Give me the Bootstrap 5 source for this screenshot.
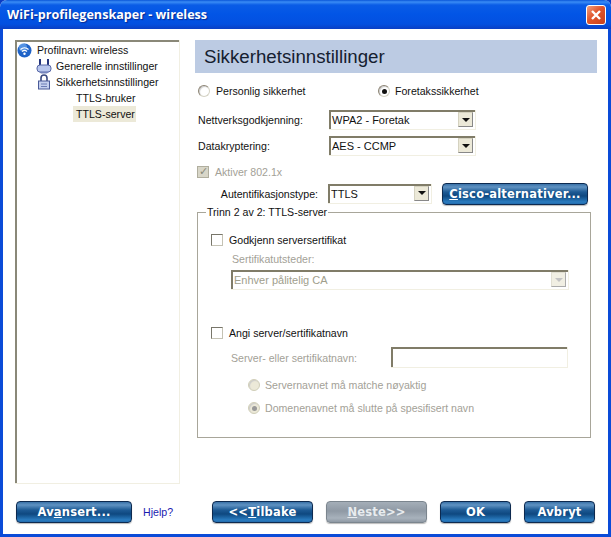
<!DOCTYPE html>
<html lang="no">
<head>
<meta charset="utf-8">
<title>WiFi-profilegenskaper</title>
<link href="https://cdn.jsdelivr.net/npm/bootstrap@5.3.0/dist/css/bootstrap.min.css" rel="stylesheet">
<style>
html,body{margin:0;width:611px;height:537px;overflow:hidden;background:#0a3cc4}
body{font:10.6px/14px "Liberation Sans",Arial,sans-serif;color:#111}
.xp-win{width:611px;height:537px;background:#fff;border-radius:7px 7px 0 0;overflow:hidden}
.xp-title{height:29px;flex:none;padding:0 5px 0 7px;background:linear-gradient(#0a56d8 0,#3a8cf5 2px,#0a5ce6 5px,#0255e6 14px,#0350e0 24px,#0a3fc4 29px);color:#fff;font:bold 12.6px "Open Sans",sans-serif;text-shadow:1px 1px 1px #0a2a90}
.xp-close{width:20px;height:20px;border:1px solid #fff;border-radius:3px;background:linear-gradient(135deg,#f0a080,#e0552c 45%,#c8401c)}
.xp-body{border:solid #0a4bd8;border-width:0 3px 3px;background:#fff;min-height:0;padding:11px 11px 11px 12px}
.xp-tree{width:165px;height:444px;flex:none;border:solid #f1efe2;border-width:0 1px 1px 0;box-shadow:inset 2px 2px 0 #8a8878;padding:2px 2px}
.tree-row{height:16px;display:flex;align-items:center;gap:4px;white-space:nowrap}
.tree-first{gap:5px}
.tree-l1{padding-left:19px}.tree-l2{padding-left:59px}
.tree-sel{background:#ece9d8;margin-left:56px;padding:0 3px;width:63px}
.xp-main{width:402px;margin-left:15px;flex:none}
.xp-head{height:33px;background:#bccbe3;font-size:18.7px;padding-left:9px;margin-bottom:9px;color:#152030}
.rad-row{height:18px;padding-left:3px;margin-bottom:10px}
.rad{width:12px;height:12px;flex:none;border-radius:50%;background:#fff;border:1px solid #d4d2c4;border-top-color:#8c8474;border-left-color:#8c8474;box-shadow:inset 1px 1px 1px #ccc;display:inline-flex;align-items:center;justify-content:center}
.rad i{width:5px;height:5px;border-radius:50%;background:#111;display:block}
.rad.off{background:#ece9d8;border-color:#d0ceb8}.rad.off i{background:#999}
.lbl-w{width:134px;padding-left:3px;flex:none}
.xp-sel{height:20px;background:#fff;border:solid #f1efe2;border-width:0 1px 1px 0;box-shadow:inset 2px 2px 0 #807c68;padding:2px 2px 0 3px;font-size:11px}
.xp-sel>span:first-child{padding-top:1px}
.xp-sel.wide{width:147px}
.xp-arrow{width:15px;height:15px;flex:none;background:#ece9d8;border:1px solid #d5d2c0;border-right-color:#888;border-bottom-color:#888;display:flex;align-items:center;justify-content:center}
.xp-arrow::after{content:"";border:solid transparent;border-width:4px 4px 0;border-top-color:#111}
.xp-sel.dis{color:#a09e8c;background:#fff}.dis .xp-arrow{opacity:.7}.dis .xp-arrow::after{border-top-color:#aaa}
.mut{color:#a3a197}
.cbx{width:12px;height:12px;flex:none;border:1px solid #c4c2b4;border-top-color:#78766a;border-left-color:#78766a;background:#fff}
.cbx.dis{background:#d8d6c8;color:#8a8878;font-size:11px;line-height:9px;text-align:center;border-color:#b0ae9e}
.xp-btn{display:inline-flex;align-items:center;justify-content:center;height:22px;padding:0;border:1px solid #0d2a50;border-radius:4px;color:#fff;font:bold 11.5px "DejaVu Sans",sans-serif;letter-spacing:.2px;background:linear-gradient(#3a72a8 0,#5f92c2 3px,#1d5a94 8px,#0e4880 12px,#2a7cc0 18px,#1a5a98 22px);box-shadow:0 1px 1px #bbb}
.xp-btn.off{background:linear-gradient(#a4aeb8,#8f99a4 45%,#a8b2bc 80%,#8f99a4);border-color:#7b858e;color:#e8ecef}
.xp-set{border:1px solid #a8a69a;margin:1px 0 0 2px;width:394px;height:233px;padding:0 0 0 13px}
.xp-set legend{float:none;width:auto;font-size:10.6px;line-height:14px;margin:0 0 0 -5px;padding:0 1px}
.xp-in{width:177px;height:21px;background:#fff;border:solid #f1efe2;border-width:0 1px 1px 0;box-shadow:inset 2px 2px 0 #807c68}
.xp-foot{height:22px;margin-top:17px;padding-left:1px}
.xp-link{color:#1a1ab0;margin:0 38px 0 11px;width:31px;white-space:nowrap}
.rad-one{width:162px;margin-left:6px}.rad-two{margin-left:5px}
.fs-l1{height:16px;margin-top:13px}.fs-l2{margin:4px 0 4px 21px}
.fs-sel{width:338px;margin:4px 0 0 20px}
.fs-l3{height:16px;margin-top:35px}.fs-l4{height:21px;margin-top:6px;padding-left:20px}
.fs-lab{width:160px}.fs-r{height:14px;padding-left:37px}.fs-r1{margin-top:10px}.fs-r2{margin-top:9px}
.fs-rt{margin-left:5px}
.fs-ct{margin-left:6px}
.row-dk{margin-bottom:6px}.row-nt{margin-bottom:8px}
.row-ak{height:16px;padding-left:2px;margin-bottom:3px}
.ak-t{margin-left:6px}
.row-au{height:21px}.lab-au{width:123px;margin-right:10px;flex:none}
.sel-au{width:104px}.btn-cis{width:146px;margin-left:10px}
.btn-av{width:116px}.btn-bk{width:101px}.btn-nx{width:101px;margin-left:13px}.btn-sm1{width:71px;margin-left:13px}
</style>
</head>
<body>
<div class="xp-win d-flex flex-column">
  <div class="xp-title d-flex align-items-center justify-content-between">
    <span>WiFi-profilegenskaper - wireless</span>
    <span class="xp-close d-flex align-items-center justify-content-center">
      <svg width="12" height="12" viewBox="0 0 12 12"><path d="M2 2l8 8M10 2l-8 8" stroke="#fff" stroke-width="2.4"/></svg>
    </span>
  </div>
  <div class="xp-body flex-grow-1">
    <div class="d-flex">
      <div class="xp-tree">
        <div class="tree-row tree-first">
          <svg width="15" height="15" viewBox="0 0 15 15"><circle cx="7.5" cy="7.5" r="7" fill="#1f63c8"/><circle cx="6" cy="4.5" r="4" fill="#6aa6ee" opacity=".7"/><path d="M3.5 6.5a6 6 0 0 1 8 0M5 8.5a3.6 3.6 0 0 1 5 0" stroke="#fff" fill="none" stroke-width="1.2"/><circle cx="7.5" cy="10.8" r="1.2" fill="#fff"/></svg>
          <span>Profilnavn: wireless</span>
        </div>
        <div class="tree-row tree-l1">
          <svg width="16" height="16" viewBox="0 0 16 16"><path d="M4 1v7M12 1v7" stroke="#24347c" stroke-width="2"/><rect x="1" y="7" width="14" height="7" rx="3" fill="#b8c6ec" stroke="#5868a8"/><path d="M3 14l2 1.500h6l2-1.500" fill="#7484bc"/></svg>
          <span>Generelle innstillinger</span>
        </div>
        <div class="tree-row tree-l1">
          <svg width="16" height="16" viewBox="0 0 16 16"><path d="M5 7V4a3 3 0 0 1 6 0v3" stroke="#3a4a80" stroke-width="1.600" fill="none"/><rect x="2.500" y="7" width="11" height="8" fill="#c4cfee" stroke="#4a5a98"/><path d="M5 10h6M5 12.500h6" stroke="#6c7cb4"/></svg>
          <span>Sikkerhetsinnstillinger</span>
        </div>
        <div class="tree-row tree-l2">TTLS-bruker</div>
        <div class="tree-row tree-sel">TTLS-server</div>
      </div>
      <div class="xp-main">
        <div class="xp-head d-flex align-items-center">Sikkerhetsinnstillinger</div>
        <div class="rad-row d-flex align-items-center">
          <span class="rad"></span><span class="rad-one">Personlig sikkerhet</span>
          <span class="rad"><i></i></span><span class="rad-two">Foretakssikkerhet</span>
        </div>
        <div class="d-flex align-items-center row-dk">
          <span class="lbl-w">Nettverksgodkjenning:</span>
          <div class="xp-sel wide d-flex justify-content-between"><span>WPA2 - Foretak</span><span class="xp-arrow"></span></div>
        </div>
        <div class="d-flex align-items-center row-nt">
          <span class="lbl-w">Datakryptering:</span>
          <div class="xp-sel wide d-flex justify-content-between"><span>AES - CCMP</span><span class="xp-arrow"></span></div>
        </div>
        <div class="d-flex align-items-center mut row-ak">
          <span class="cbx dis">✓</span><span class="ak-t">Aktiver 802.1x</span>
        </div>
        <div class="d-flex align-items-center row-au">
          <span class="text-end lab-au">Autentifikasjonstype:</span>
          <div class="xp-sel d-flex justify-content-between sel-au"><span>TTLS</span><span class="xp-arrow"></span></div>
          <button type="button" class="xp-btn btn-cis"><span><u>C</u>isco-alternativer...</span></button>
        </div>
        <fieldset class="xp-set">
          <legend>Trinn 2 av 2: TTLS-server</legend>
          <div class="d-flex align-items-center fs-l1"><span class="cbx"></span><span class="fs-ct">Godkjenn serversertifikat</span></div>
          <div class="mut fs-l2">Sertifikatutsteder:</div>
          <div class="xp-sel dis d-flex justify-content-between fs-sel"><span>Enhver pålitelig CA</span><span class="xp-arrow"></span></div>
          <div class="d-flex align-items-center fs-l3"><span class="cbx"></span><span class="fs-ct">Angi server/sertifikatnavn</span></div>
          <div class="d-flex align-items-center mut fs-l4">
            <span class="fs-lab">Server- eller sertifikatnavn:</span><span class="xp-in"></span>
          </div>
          <div class="d-flex align-items-center mut fs-r fs-r1"><span class="rad off"></span><span class="fs-rt">Servernavnet må matche nøyaktig</span></div>
          <div class="d-flex align-items-center mut fs-r fs-r2"><span class="rad off"><i></i></span><span class="fs-rt">Domenenavnet må slutte på spesifisert navn</span></div>
        </fieldset>
      </div>
    </div>
    <div class="xp-foot d-flex align-items-center">
      <button type="button" class="xp-btn btn-av"><span>Av<u>a</u>nsert...</span></button>
      <span class="xp-link">Hjelp?</span>
      <button type="button" class="xp-btn btn-bk"><span>&lt;&lt;<u>T</u>ilbake</span></button>
      <button type="button" class="xp-btn off btn-nx"><span><u>N</u>este&gt;&gt;</span></button>
      <button type="button" class="xp-btn btn-sm1">OK</button>
      <button type="button" class="xp-btn btn-sm1">Avbryt</button>
    </div>
  </div>
</div>
</body>
</html>
